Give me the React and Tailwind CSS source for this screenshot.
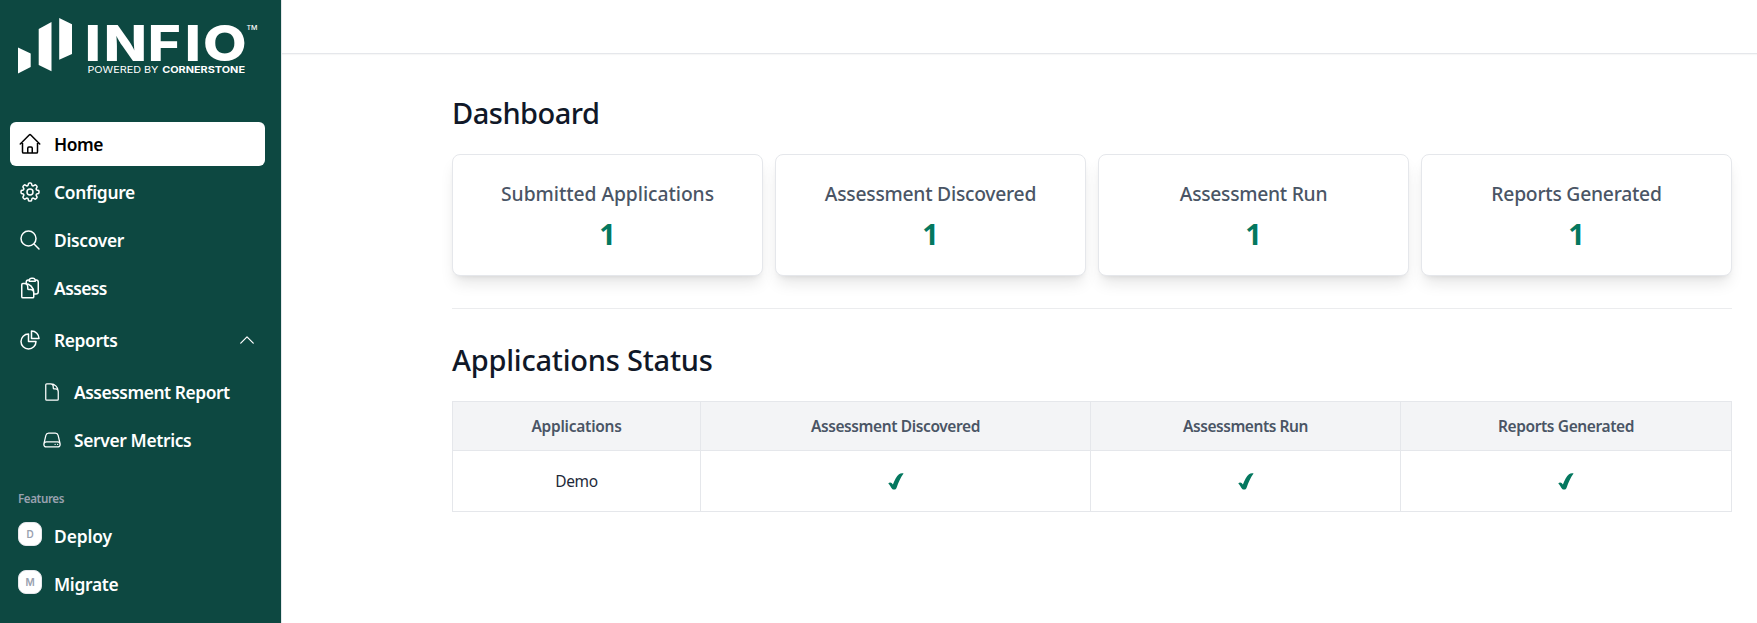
import {
  HiOutlineHome,
  HiOutlineCog8Tooth,
  HiOutlineMagnifyingGlass,
  HiOutlineClipboardDocument,
  HiOutlineChartPie,
  HiOutlineDocument,
  HiOutlineServer,
  HiOutlineChevronUp,
} from "react-icons/hi2";

const mainLinks = [
  { label: "Home", icon: HiOutlineHome, tracking: "tracking-[-0.45px]", active: true },
  { label: "Configure", icon: HiOutlineCog8Tooth, tracking: "tracking-[-0.3px]" },
  { label: "Discover", icon: HiOutlineMagnifyingGlass, tracking: "tracking-[-0.32px]" },
  { label: "Assess", icon: HiOutlineClipboardDocument, tracking: "tracking-[-0.55px]" },
];

const reportLinks = [
  { label: "Assessment Report", icon: HiOutlineDocument, tracking: "tracking-[-0.45px]" },
  { label: "Server Metrics", icon: HiOutlineServer, tracking: "tracking-[-0.35px]" },
];

const featureLinks = [
  { label: "Deploy", initial: "D", tracking: "tracking-[-0.1px]" },
  { label: "Migrate", initial: "M", tracking: "tracking-[-0.3px]" },
];

const stats = [
  { label: "Submitted Applications", value: 1, tracking: "tracking-[-0.06px]" },
  { label: "Assessment Discovered", value: 1, tracking: "tracking-[-0.25px]" },
  { label: "Assessment Run", value: 1, tracking: "tracking-[-0.28px]" },
  { label: "Reports Generated", value: 1, tracking: "tracking-[-0.24px]" },
];

const columns = [
  { label: "Applications", width: "w-[248px]", tracking: "tracking-[-0.25px]" },
  { label: "Assessment Discovered", width: "w-[390px]", tracking: "tracking-[-0.39px]" },
  { label: "Assessments Run", width: "w-[310px]", tracking: "tracking-[-0.45px]" },
  { label: "Reports Generated", width: "w-[331px]", tracking: "tracking-[-0.39px]" },
];

function Logo() {
  return (
    <svg width="245" height="80" viewBox="0 -18 245 80" fill="#fff" className="block">
      <path d="M0 29.5 12.7 35.5V49L0 55.5ZM20.7 11 33.5 4V53.3L20.7 47ZM41.2 0 54 6.2V36L41.2 41.8Z" />
      <g fontFamily="Inter, sans-serif">
        <text transform="scale(1.13 1)" x="59 75.8 114.8 147.5 163.7" y="42.6" fontSize="50" fontWeight="800">
          INFIO
        </text>
        <text x="69.4" y="55" fontSize="9" fontWeight="400" textLength="71" lengthAdjust="spacingAndGlyphs">
          POWERED BY
        </text>
        <text x="144.2" y="55" fontSize="9" fontWeight="700" textLength="82.8" lengthAdjust="spacingAndGlyphs">
          CORNERSTONE
        </text>
        <text x="228.5" y="11.5" fontSize="6" fontWeight="500" textLength="11" lengthAdjust="spacingAndGlyphs">
          TM
        </text>
      </g>
    </svg>
  );
}

function Check() {
  return (
    <svg width="16" height="17" viewBox="0 0 16 17" className="mx-auto block" fill="#04785f">
      <path d="M.3 10.6C1.4 8.9 3.6 9 4.9 11.6 6.5 7.6 8.6 3 11 1.2 12.4.2 14.2 0 15.6.5 12.6 4.5 10.6 9 8.7 14.4 8 16.1 7 16.8 5.2 16.5 3.4 16.1 3 13.5.3 10.6Z" />
    </svg>
  );
}

function Sidebar() {
  return (
    <aside className="flex w-[282px] shrink-0 flex-col border-r border-gray-200 bg-[#0d4841] pr-4 pl-2.5 text-[17.4px] leading-7 font-semibold text-white">
      <div className="h-[122px] pl-2">
        <Logo />
      </div>
      <nav className="flex flex-col gap-1">
        {mainLinks.map(({ label, icon: Icon, tracking, active }) => (
          <a
            key={label}
            className={`flex h-11 items-center gap-3 rounded-md px-2 ${active ? "bg-white text-black" : ""}`}
          >
            <Icon className="size-6" />
            <span className={tracking}>{label}</span>
          </a>
        ))}
        <a className="flex h-[52px] items-center gap-3 px-2">
          <HiOutlineChartPie className="size-6" />
          <span className="flex-1 tracking-[-0.38px]">Reports</span>
          <HiOutlineChevronUp className="size-5" />
        </a>
        {reportLinks.map(({ label, icon: Icon, tracking }) => (
          <a key={label} className="flex h-11 items-center gap-3 pl-8">
            <Icon className="size-5" />
            <span className={tracking}>{label}</span>
          </a>
        ))}
      </nav>
      <h3 className="mt-[29px] pl-2 text-[11.6px] leading-4 tracking-[-0.4px] text-gray-400">Features</h3>
      <nav className="mt-[7px] flex flex-col gap-1">
        {featureLinks.map(({ label, initial, tracking }) => (
          <a key={label} className="flex h-11 items-center gap-3 px-2">
            <span className="mb-1 flex size-6 items-center justify-center rounded-lg border border-gray-200 bg-white font-[Inter,sans-serif] text-[10px] font-semibold text-gray-400">
              {initial}
            </span>
            <span className={tracking}>{label}</span>
          </a>
        ))}
      </nav>
    </aside>
  );
}

export default function App() {
  return (
    <div className="flex h-[623px] overflow-hidden bg-white font-['Noto_Sans',sans-serif]">
      <Sidebar />
      <div className="flex flex-1 flex-col">
        <header className="h-[54px] border-b border-gray-200 shadow-[0_1px_1px_rgba(0,0,0,0.03)]" />
        <main className="w-[1450px] pt-[41px] pl-[170px]">
          <h1 className="mb-[23px] text-[29px] leading-9 font-medium tracking-[-0.5px] text-gray-900">Dashboard</h1>
          <section className="grid grid-cols-4 gap-3">
            {stats.map(({ label, value, tracking }) => (
              <div
                key={label}
                className="rounded-lg border border-gray-200 bg-white px-6 pt-[25px] pb-[23px] text-center shadow-lg"
              >
                <p className={`text-[19.3px] leading-7 font-medium whitespace-nowrap text-gray-600 ${tracking}`}>
                  {label}
                </p>
                <p className="mt-2 text-[29px] leading-9 font-bold text-[#04785f]">{value}</p>
              </div>
            ))}
          </section>
          <hr className="mt-8 mb-[33px] border-[#ebecee]" />
          <h2 className="mb-[23px] text-[29px] leading-9 font-medium tracking-[-0.23px] text-gray-900">
            Applications Status
          </h2>
          <table className="w-full table-fixed border-collapse text-center text-[15.5px] leading-6">
            <thead>
              <tr className="h-[49px] bg-gray-100 text-gray-600">
                {columns.map(({ label, width, tracking }) => (
                  <th key={label} className={`border border-gray-200 p-0 font-semibold ${width} ${tracking}`}>
                    {label}
                  </th>
                ))}
              </tr>
            </thead>
            <tbody>
              <tr className="h-[61px] text-gray-800">
                <td className="border border-gray-200 p-0 tracking-[-0.3px]">Demo</td>
                <td className="border border-gray-200 p-0"><Check /></td>
                <td className="border border-gray-200 p-0"><Check /></td>
                <td className="border border-gray-200 p-0"><Check /></td>
              </tr>
            </tbody>
          </table>
        </main>
      </div>
    </div>
  );
}
